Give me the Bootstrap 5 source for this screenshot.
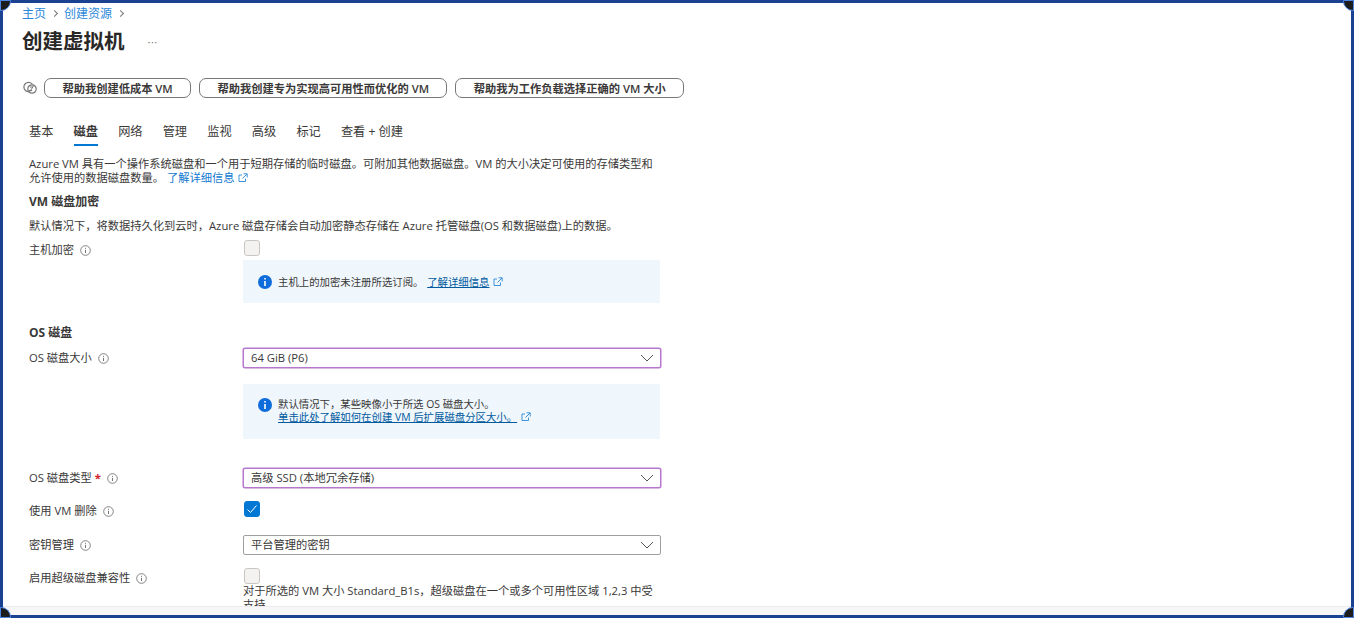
<!doctype html>
<html lang="zh-CN">
  <head>
    <meta charset="utf-8">
    <title>创建虚拟机</title>
    <link href="https://cdn.jsdelivr.net/npm/bootstrap@5.3.0/dist/css/bootstrap.min.css" rel="stylesheet">
    <style>
      html, body { height: 100%; overflow: hidden; }
      body {
        font-family: "Open Sans", "Noto Sans CJK SC", sans-serif;
        font-size: 11.25px;
        line-height: 14px;
        color: #3a3938;
        background: #fff;
      }
      .frame { height: 618px; border: 3px solid #1b4291; position: relative; }
      .corner { position: absolute; width: 11px; height: 11px; background: #1c1c1c; border: 1px solid #4a86e8; }
      .corner-tl { top: -3px; left: -3px; border-radius: 0 0 10px 0; }
      .corner-tr { top: -3px; right: -3px; border-radius: 0 0 0 10px; }
      .corner-bl { bottom: -3px; left: -3px; border-radius: 0 10px 0 0; }
      .corner-br { bottom: -3px; right: -3px; border-radius: 10px 0 0 0; }
      .page-main { height: 603px; overflow: hidden; padding-left: 19px; }
      .page-foot { height: 9px; background: #f7f7f7; border-top: 1px solid #ececec; }
      .crumbs { height: 20px; margin: 0; padding-top: 1px; font-size: 12px; line-height: 19px; --bs-breadcrumb-item-padding-x: 3px; }
      .crumbs a { color: #2b88d8; text-decoration: none; }
      .crumbs .breadcrumb-item + .breadcrumb-item::before { content: ""; float: none; display: inline-block; width: 5px; height: 5px; padding: 0; margin: 0 7px 2px 3px; border-top: 1px solid #777; border-right: 1px solid #777; transform: rotate(45deg); }
      .title-row { height: 36px; }
      .page-title { font-size: 20.5px; line-height: 36px; font-weight: 600; color: #292827; margin: 0; }
      .title-more { margin: 2px 0 0 23px; color: #777; font-size: 11px; letter-spacing: 0.5px; }
      .help-row { margin-top: 19px; height: 20px; }
      .help-icon { width: 14px; height: 14px; margin: 0 0 0 1px; flex: none; }
      .help-lead { margin-right: -1px; }
      .help-btn { height: 20px; padding: 0 17.4px; font-size: 11.25px; line-height: 17px; font-weight: 600; color: #3a3938; border: 1px solid #777; border-radius: 7px; background: #fff; white-space: nowrap; }
      .wizard-tabs { margin: 21px 0 0 7px; gap: 20.2px; height: 27px; font-size: 12.2px; }
      .wizard-tabs .nav-link { padding: 6px 0 0; height: 27px; line-height: 14px; color: #3a3938; }
      .wizard-tabs .nav-link.active { font-weight: 600; border-bottom: 2px solid #0078d4; }
      .form-area { margin-left: 7px; width: 640px; }
      .intro { margin: 11px 0 0; }
      .intro a { text-decoration: none; color: #0f78d0; }
      .note a { text-decoration: underline; color: #005a9e; }
      .ext-icon { width: 10px; height: 10px; margin-left: 1px; vertical-align: -1px; }
      .sect-title { font-size: 12px; line-height: 14px; font-weight: 700; margin: 0; }
      .field { display: flex; }
      .field-label { width: 214px; flex: none; display: flex; align-items: center; height: 20px; }
      .field-ctl { width: 418px; flex: none; }
      .i-icon { width: 11px; height: 11px; margin-left: 6px; flex: none; }
      .req { color: #d0202a; margin-left: 3px; font-weight: 700; }
      .box-check { width: 16px; height: 16px; margin: 0 0 0 1px; display: block; border-radius: 2px; }
      .box-check:disabled { background-color: #f3f2f1; border: 1px solid #c8c6c4; opacity: 1; }
      .box-check:checked { background-color: #0078d4; border-color: #0078d4; background-size: 16px 16px; background-image: url("data:image/svg+xml,%3csvg xmlns='http://www.w3.org/2000/svg' viewBox='0 0 16 16'%3e%3cpath fill='none' stroke='%23fff' stroke-width='1' d='M3.5 8.5l3 3 6-7'/%3e%3c/svg%3e"); }
      .pick { height: 20px; padding: 0 28px 0 7px; font-size: 11.25px; line-height: 18px; color: #3a3938; border: 1px solid #a19f9d; border-radius: 2px; background-position: right 6px center; background-size: 14px 8px; background-image: url("data:image/svg+xml,%3csvg xmlns='http://www.w3.org/2000/svg' viewBox='0 0 14 8'%3e%3cpath fill='none' stroke='%23555' stroke-width='1' d='M1 1l6 6 6-6'/%3e%3c/svg%3e"); }
      .pick-mark { border-color: #b678cf; box-shadow: 0 0 0 0.5px #b678cf; }
      .note { background: #eff6fc; width: 417px; display: flex; border-radius: 1px; font-size: 10.4px; }
      .note-icon { width: 14px; height: 14px; flex: none; }
      .note-link { margin-left: 1px; }
    </style>
  </head>
  <body>
    <div class="frame">
      <span class="corner corner-tl"></span>
      <span class="corner corner-tr"></span>
      <span class="corner corner-bl"></span>
      <span class="corner corner-br"></span>

      <div class="page-main">
        <ol class="breadcrumb crumbs">
          <li class="breadcrumb-item"><a href="#">主页</a></li>
          <li class="breadcrumb-item"><a href="#">创建资源</a></li>
          <li class="breadcrumb-item"></li>
        </ol>
        <div class="d-flex align-items-center title-row">
          <h1 class="page-title">创建虚拟机</h1>
          <span class="title-more">···</span>
        </div>

        <div class="d-flex align-items-center gap-2 help-row">
          <svg class="help-icon help-lead" viewBox="0 0 14 14" fill="none" stroke="#777" stroke-width="1.2"><circle cx="5.5" cy="6" r="4.6"/><circle cx="9" cy="8" r="4.2" fill="#fff"/><path d="M6.5 11 10.5 5M7 6h3M6 9.5h3" stroke-width="1"/></svg>
          <button type="button" class="btn help-btn">帮助我创建低成本 VM</button>
          <button type="button" class="btn help-btn">帮助我创建专为实现高可用性而优化的 VM</button>
          <button type="button" class="btn help-btn">帮助我为工作负载选择正确的 VM 大小</button>
        </div>

        <ul class="nav wizard-tabs">
          <li class="nav-item"><a class="nav-link" href="#">基本</a></li>
          <li class="nav-item"><a class="nav-link active" href="#">磁盘</a></li>
          <li class="nav-item"><a class="nav-link" href="#">网络</a></li>
          <li class="nav-item"><a class="nav-link" href="#">管理</a></li>
          <li class="nav-item"><a class="nav-link" href="#">监视</a></li>
          <li class="nav-item"><a class="nav-link" href="#">高级</a></li>
          <li class="nav-item"><a class="nav-link" href="#">标记</a></li>
          <li class="nav-item"><a class="nav-link" href="#">查看 + 创建</a></li>
        </ul>

        <div class="form-area">
          <p class="intro">Azure VM 具有一个操作系统磁盘和一个用于短期存储的临时磁盘。可附加其他数据磁盘。VM 的大小决定可使用的存储类型和<br>允许使用的数据磁盘数量。 <a href="#">了解详细信息 <svg class="ext-icon" viewBox="0 0 10 10" fill="none" stroke="#2b88d8" stroke-width="0.9"><path d="M7.5 5.5v3h-6.5v-6.5h3M5.5 0.8h3.7v3.7M9 1 4.5 5.5"/></svg></a></p>

          <h2 class="sect-title" style="margin-top:10px">VM 磁盘加密</h2>
          <p class="mb-0" style="margin-top:10px">默认情况下，将数据持久化到云时，Azure 磁盘存储会自动加密静态存储在 Azure 托管磁盘(OS 和数据磁盘)上的数据。</p>

          <div class="field" style="margin-top:7px">
            <div class="field-label">主机加密<svg class="i-icon" viewBox="0 0 11 11" fill="none" stroke="#777"><circle cx="5.5" cy="5.5" r="4.8" stroke-width="0.9"/><path d="M5.5 4.8v3.2M5.5 2.8v1" stroke-width="1"/></svg></div>
            <div class="field-ctl">
              <input class="form-check-input box-check" type="checkbox" disabled aria-label="主机加密">
              <div class="note align-items-center" style="height:43px;margin-top:4px;padding:0 15px">
                <svg class="note-icon" viewBox="0 0 14 14"><circle cx="7" cy="7" r="7" fill="#0f6cdb"/><path d="M7 6v5M7 3v1.6" stroke="#fff" stroke-width="1.6"/></svg>
                <span style="margin-left:6px">主机上的加密未注册所选订阅。 <a href="#" class="note-link">了解详细信息</a> <svg class="ext-icon" viewBox="0 0 10 10" fill="none" stroke="#2b88d8" stroke-width="0.9"><path d="M7.5 5.5v3h-6.5v-6.5h3M5.5 0.8h3.7v3.7M9 1 4.5 5.5"/></svg></span>
              </div>
            </div>
          </div>

          <h2 class="sect-title" style="margin-top:23px">OS 磁盘</h2>

          <div class="field" style="margin-top:8px">
            <div class="field-label">OS 磁盘大小<svg class="i-icon" viewBox="0 0 11 11" fill="none" stroke="#777"><circle cx="5.5" cy="5.5" r="4.8" stroke-width="0.9"/><path d="M5.5 4.8v3.2M5.5 2.8v1" stroke-width="1"/></svg></div>
            <div class="field-ctl">
              <select class="form-select pick pick-mark" aria-label="OS 磁盘大小"><option>64 GiB (P6)</option></select>
              <div class="note" style="height:55px;margin-top:16px;padding:14px 15px 0">
                <svg class="note-icon" viewBox="0 0 14 14"><circle cx="7" cy="7" r="7" fill="#0f6cdb"/><path d="M7 6v5M7 3v1.6" stroke="#fff" stroke-width="1.6"/></svg>
                <span style="margin-left:6px;line-height:13px">默认情况下，某些映像小于所选 OS 磁盘大小。<br><a href="#">单击此处了解如何在创建 VM 后扩展磁盘分区大小。</a> <svg class="ext-icon" viewBox="0 0 10 10" fill="none" stroke="#2b88d8" stroke-width="0.9"><path d="M7.5 5.5v3h-6.5v-6.5h3M5.5 0.8h3.7v3.7M9 1 4.5 5.5"/></svg></span>
              </div>
            </div>
          </div>

          <div class="field" style="margin-top:29px">
            <div class="field-label">OS 磁盘类型<span class="req">*</span><svg class="i-icon" viewBox="0 0 11 11" fill="none" stroke="#777"><circle cx="5.5" cy="5.5" r="4.8" stroke-width="0.9"/><path d="M5.5 4.8v3.2M5.5 2.8v1" stroke-width="1"/></svg></div>
            <div class="field-ctl"><select class="form-select pick pick-mark" aria-label="OS 磁盘类型"><option>高级 SSD (本地冗余存储)</option></select></div>
          </div>

          <div class="field" style="margin-top:13px">
            <div class="field-label">使用 VM 删除<svg class="i-icon" viewBox="0 0 11 11" fill="none" stroke="#777"><circle cx="5.5" cy="5.5" r="4.8" stroke-width="0.9"/><path d="M5.5 4.8v3.2M5.5 2.8v1" stroke-width="1"/></svg></div>
            <div class="field-ctl"><input class="form-check-input box-check" type="checkbox" checked aria-label="使用 VM 删除"></div>
          </div>

          <div class="field" style="margin-top:14px">
            <div class="field-label">密钥管理<svg class="i-icon" viewBox="0 0 11 11" fill="none" stroke="#777"><circle cx="5.5" cy="5.5" r="4.8" stroke-width="0.9"/><path d="M5.5 4.8v3.2M5.5 2.8v1" stroke-width="1"/></svg></div>
            <div class="field-ctl"><select class="form-select pick" aria-label="密钥管理"><option>平台管理的密钥</option></select></div>
          </div>

          <div class="field" style="margin-top:13px">
            <div class="field-label">启用超级磁盘兼容性<svg class="i-icon" viewBox="0 0 11 11" fill="none" stroke="#777"><circle cx="5.5" cy="5.5" r="4.8" stroke-width="0.9"/><path d="M5.5 4.8v3.2M5.5 2.8v1" stroke-width="1"/></svg></div>
            <div class="field-ctl">
              <input class="form-check-input box-check" type="checkbox" disabled aria-label="启用超级磁盘兼容性">
              <div>对于所选的 VM 大小 Standard_B1s，超级磁盘在一个或多个可用性区域 1,2,3 中受支持。</div>
            </div>
          </div>
        </div>
      </div>
      <div class="page-foot"></div>
    </div>
    <script src="https://cdn.jsdelivr.net/npm/bootstrap@5.3.0/dist/js/bootstrap.bundle.min.js"></script>
  </body>
</html>
